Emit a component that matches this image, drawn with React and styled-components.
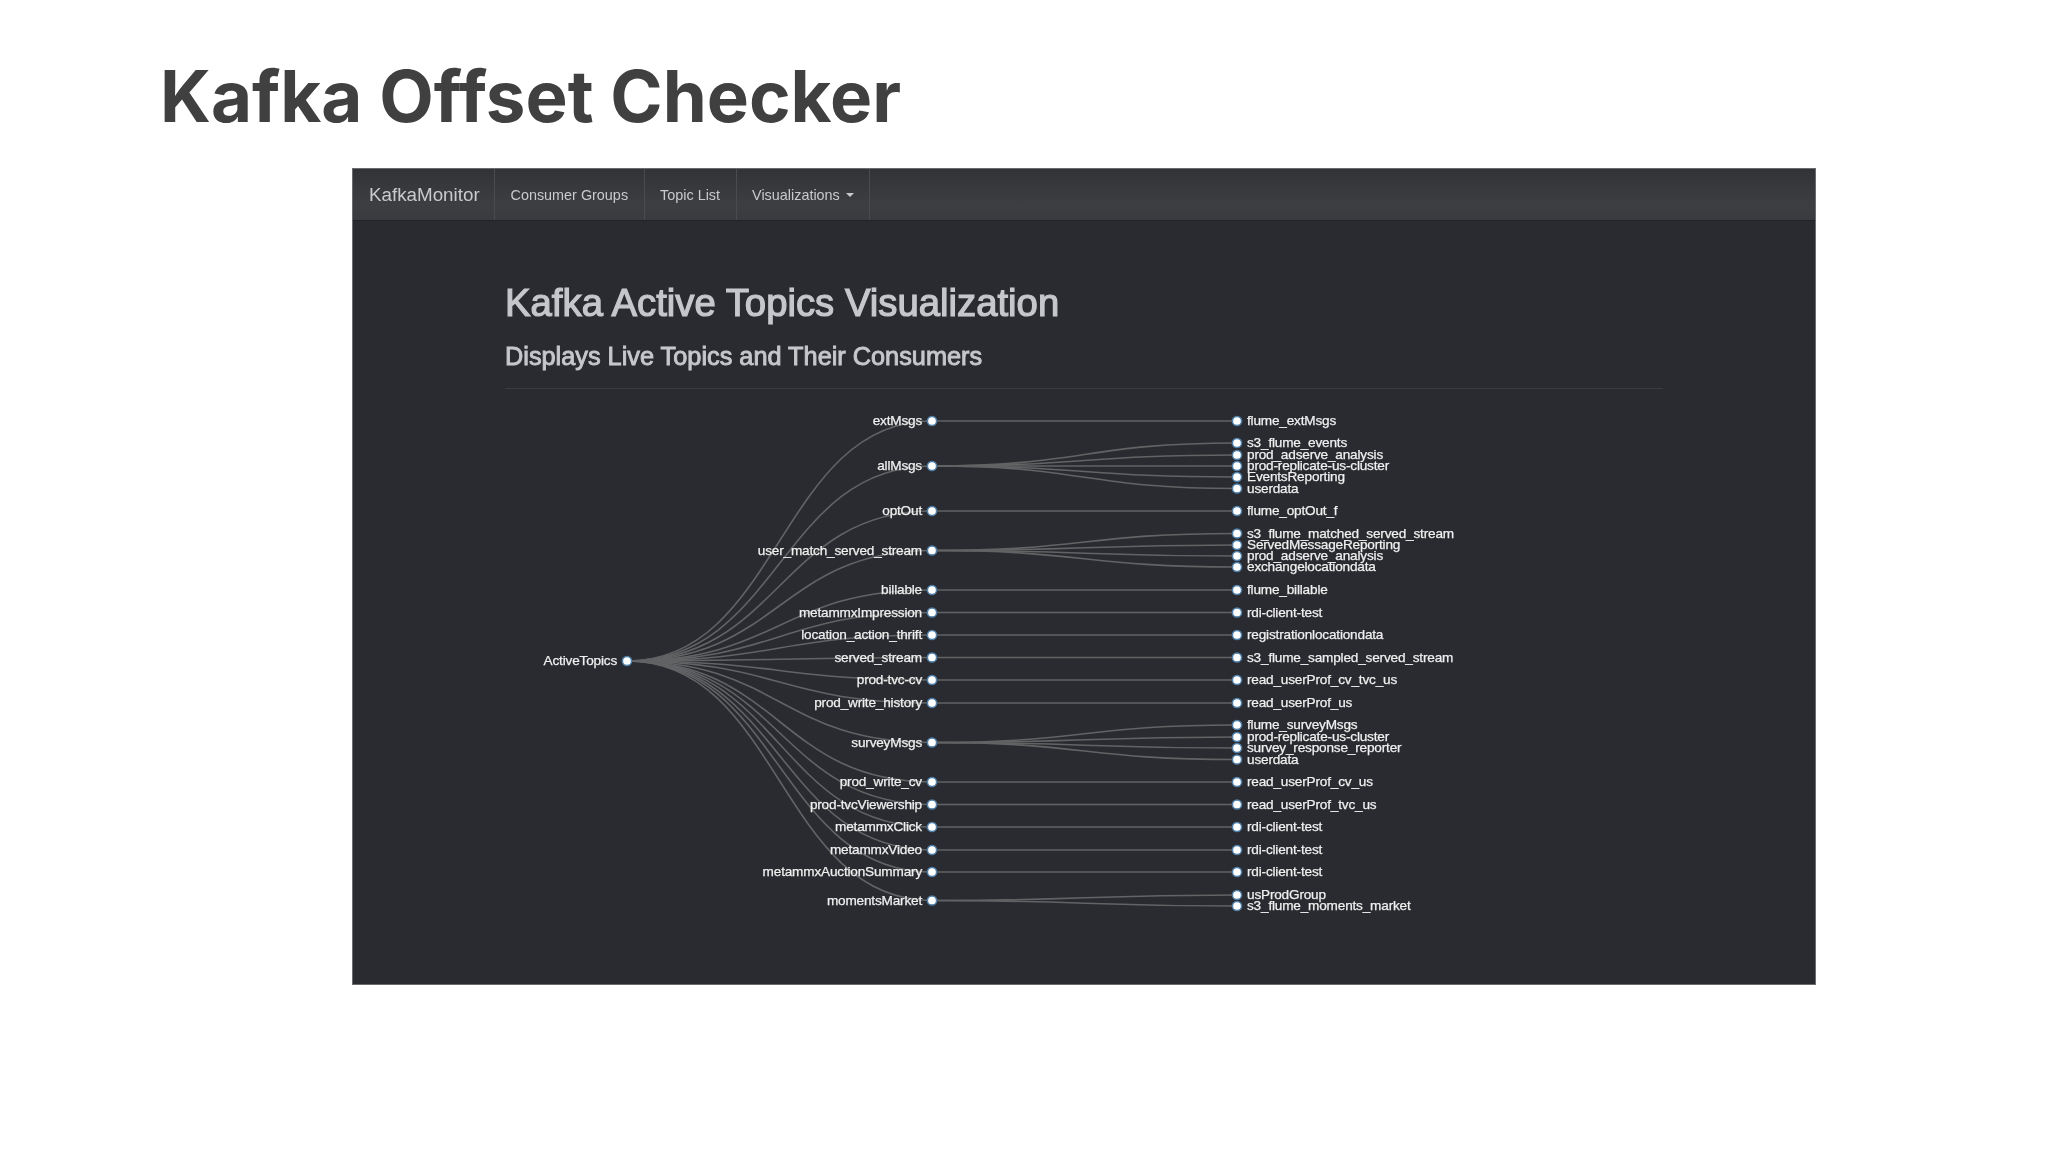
import React from 'react';
import styled, { createGlobalStyle } from 'styled-components';

const GlobalStyle = createGlobalStyle`
    html, body {
        margin: 0;
        background: #ffffff;
    }
`
const Page = styled.div`
    width: 2048px;
    height: 1152px;
    overflow: hidden;
    background: #ffffff;
    filter: blur(0.4px);
`
const SlideTitle = styled.h1`
    margin: 0;
    padding: 56px 0 0 160px;
    height: 112px;
    box-sizing: border-box;
    font-family: Inter, "Open Sans", sans-serif;
    font-size: 70.8px;
    line-height: 80px;
    font-weight: 700;
    color: #404041;
`
const Panel = styled.div`
    margin-left: 353px;
    margin-top: 57px;
    width: 1462px;
    height: 815px;
    background: #2a2b30;
    font-family: "Liberation Sans", Arial, sans-serif;
    outline: 1px solid #6a6b6e;
`
const Navbar = styled.nav`
    display: flex;
    height: 51px;
    background: linear-gradient(to bottom, #323337, #3c3e42 70%, #393b3e);
    border-bottom: 1px solid #222327;
`
const Brand = styled.a`
    display: flex;
    align-items: center;
    padding: 0 15px 0 16px;
    width: 110px;
    font-size: 18.8px;
    color: #c9cacd;
    border-right: 1px solid #4a4b50;
`
const NavLink = styled.a`
    display: flex;
    align-items: center;
    gap: 6px;
    padding: 0 15.5px;
    font-size: 14.4px;
    color: #c9cacd;
    border-right: 1px solid #4a4b50;
`
const Caret = styled.span`
    width: 0;
    height: 0;
    border-top: 4px solid #c9cacd;
    border-left: 4px solid transparent;
    border-right: 4px solid transparent;
`
const Content = styled.div`
    padding: 0 152px 0 152px;
`
const Heading = styled.h2`
    margin: 0;
    padding-top: 58px;
    font-size: 38.3px;
    line-height: 48px;
    font-weight: 400;
    color: #c6c7cb;
    -webkit-text-stroke: 1.2px #c6c7cb;
`
const SubHeading = styled.h3`
    margin: 0;
    padding-top: 14px;
    font-size: 25.3px;
    line-height: 30px;
    font-weight: 400;
    color: #c6c7cb;
    -webkit-text-stroke: 0.9px #c6c7cb;
`
const Rule = styled.div`
    margin-top: 17px;
    height: 1px;
    background: #3c3d42;
`
const TreeSvg = styled.svg`
    display: block;
    width: 1462px;
    height: 595px;
`
const Link = styled.path`
    fill: none;
    stroke: #626365;
    stroke-width: 1.6;
`
const Dot = styled.circle`
    fill: #ffffff;
    stroke: #4f7fa8;
    stroke-width: 1.5;
`
const Label = styled.text`
    font-family: "Liberation Sans", Arial, sans-serif;
    font-size: 13.6px;
    letter-spacing: -0.18px;
    fill: #f0f0f0;
    stroke: #f0f0f0;
    stroke-width: 0.25;
`

const ROOT = { x: 627, y: 661, name: 'ActiveTopics' }
const MID_X = 932
const LEAF_X = 1237

const topics = [
    { name: 'extMsgs', y: 421, consumers: [['flume_extMsgs', 421]] },
    { name: 'allMsgs', y: 466, consumers: [['s3_flume_events', 443], ['prod_adserve_analysis', 455], ['prod-replicate-us-cluster', 466], ['EventsReporting', 477], ['userdata', 488.5]] },
    { name: 'optOut', y: 511, consumers: [['flume_optOut_f', 511]] },
    { name: 'user_match_served_stream', y: 550.5, consumers: [['s3_flume_matched_served_stream', 533.5], ['ServedMessageReporting', 545], ['prod_adserve_analysis', 556], ['exchangelocationdata', 567]] },
    { name: 'billable', y: 590, consumers: [['flume_billable', 590]] },
    { name: 'metammxImpression', y: 612.5, consumers: [['rdi-client-test', 612.5]] },
    { name: 'location_action_thrift', y: 635, consumers: [['registrationlocationdata', 635]] },
    { name: 'served_stream', y: 657.5, consumers: [['s3_flume_sampled_served_stream', 657.5]] },
    { name: 'prod-tvc-cv', y: 680, consumers: [['read_userProf_cv_tvc_us', 680]] },
    { name: 'prod_write_history', y: 703, consumers: [['read_userProf_us', 703]] },
    { name: 'surveyMsgs', y: 742.5, consumers: [['flume_surveyMsgs', 725], ['prod-replicate-us-cluster', 737], ['survey_response_reporter', 748], ['userdata', 759.5]] },
    { name: 'prod_write_cv', y: 782, consumers: [['read_userProf_cv_us', 782]] },
    { name: 'prod-tvcViewership', y: 804.5, consumers: [['read_userProf_tvc_us', 804.5]] },
    { name: 'metammxClick', y: 827, consumers: [['rdi-client-test', 827]] },
    { name: 'metammxVideo', y: 850, consumers: [['rdi-client-test', 850]] },
    { name: 'metammxAuctionSummary', y: 872, consumers: [['rdi-client-test', 872]] },
    { name: 'momentsMarket', y: 900.5, consumers: [['usProdGroup', 895], ['s3_flume_moments_market', 906]] },
]

const curve = (x0, y0, x1, y1) => {
    const mid = (x0 + x1) / 2
    return `M${x0},${y0} C${mid},${y0} ${mid},${y1} ${x1},${y1}`
}

const Tree = () => (
    <TreeSvg viewBox="353 389 1462 595">
        {topics.map((t) => (
            <g key={t.name}>
                <Link d={curve(ROOT.x, ROOT.y, MID_X, t.y)} />
                {t.consumers.map(([name, y]) => (
                    <Link key={name} d={curve(MID_X, t.y, LEAF_X, y)} />
                ))}
            </g>
        ))}
        <Dot cx={ROOT.x} cy={ROOT.y} r="4.6" />
        <Label x={ROOT.x - 10} y={ROOT.y + 4.2} textAnchor="end">{ROOT.name}</Label>
        {topics.map((t) => (
            <g key={t.name}>
                <Dot cx={MID_X} cy={t.y} r="4.6" />
                <Label x={MID_X - 10} y={t.y + 4.2} textAnchor="end">{t.name}</Label>
                {t.consumers.map(([name, y]) => (
                    <g key={name}>
                        <Dot cx={LEAF_X} cy={y} r="4.6" />
                        <Label x={LEAF_X + 10} y={y + 4.2}>{name}</Label>
                    </g>
                ))}
            </g>
        ))}
    </TreeSvg>
)

export default function App() {
    return (
        <Page>
            <GlobalStyle />
            <SlideTitle>Kafka Offset Checker</SlideTitle>
            <Panel>
                <Navbar>
                    <Brand>KafkaMonitor</Brand>
                    <NavLink>Consumer Groups</NavLink>
                    <NavLink>Topic List</NavLink>
                    <NavLink>Visualizations <Caret /></NavLink>
                </Navbar>
                <Content>
                    <Heading>Kafka Active Topics Visualization</Heading>
                    <SubHeading>Displays Live Topics and Their Consumers</SubHeading>
                    <Rule />
                </Content>
                <Tree />
            </Panel>
        </Page>
    )
}
